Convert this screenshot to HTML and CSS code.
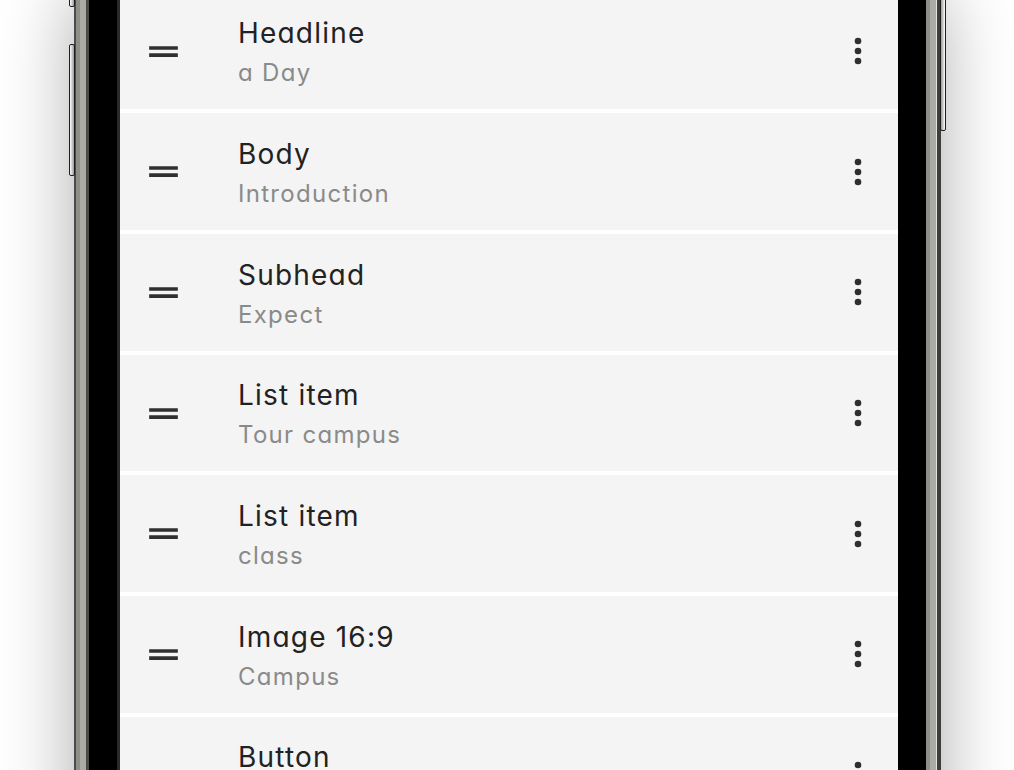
FILE: index.html
```html
<!DOCTYPE html>
<html>
<head>
<meta charset="utf-8">
<link rel="stylesheet" href="styles.css">
</head>
<body>
<div class="stage">
  <div class="phone">
    <div class="side-btn side-l1"></div>
    <div class="side-btn side-l2"></div>
    <div class="side-btn side-r1"></div>
    <div class="rim-a"><div class="rim-b"><div class="rim-c"><div class="rim-d">
      <div class="bezel">
        <div class="screen">
          <ul class="list">
            <li class="row"><span class="handle"><svg viewBox="0 0 24 24"><path d="M20 9H4v2h16V9zM4 15h16v-2H4v2z"/></svg></span><div class="text"><div class="title">Headline</div><div class="sub">a Day</div></div><span class="more"><svg viewBox="0 0 24 24"><circle cx="12" cy="6" r="2"/><circle cx="12" cy="12" r="2"/><circle cx="12" cy="18" r="2"/></svg></span></li>
            <li class="row"><span class="handle"><svg viewBox="0 0 24 24"><path d="M20 9H4v2h16V9zM4 15h16v-2H4v2z"/></svg></span><div class="text"><div class="title">Body</div><div class="sub">Introduction</div></div><span class="more"><svg viewBox="0 0 24 24"><circle cx="12" cy="6" r="2"/><circle cx="12" cy="12" r="2"/><circle cx="12" cy="18" r="2"/></svg></span></li>
            <li class="row"><span class="handle"><svg viewBox="0 0 24 24"><path d="M20 9H4v2h16V9zM4 15h16v-2H4v2z"/></svg></span><div class="text"><div class="title">Subhead</div><div class="sub">Expect</div></div><span class="more"><svg viewBox="0 0 24 24"><circle cx="12" cy="6" r="2"/><circle cx="12" cy="12" r="2"/><circle cx="12" cy="18" r="2"/></svg></span></li>
            <li class="row"><span class="handle"><svg viewBox="0 0 24 24"><path d="M20 9H4v2h16V9zM4 15h16v-2H4v2z"/></svg></span><div class="text"><div class="title">List item</div><div class="sub">Tour campus</div></div><span class="more"><svg viewBox="0 0 24 24"><circle cx="12" cy="6" r="2"/><circle cx="12" cy="12" r="2"/><circle cx="12" cy="18" r="2"/></svg></span></li>
            <li class="row"><span class="handle"><svg viewBox="0 0 24 24"><path d="M20 9H4v2h16V9zM4 15h16v-2H4v2z"/></svg></span><div class="text"><div class="title">List item</div><div class="sub">class</div></div><span class="more"><svg viewBox="0 0 24 24"><circle cx="12" cy="6" r="2"/><circle cx="12" cy="12" r="2"/><circle cx="12" cy="18" r="2"/></svg></span></li>
            <li class="row"><span class="handle"><svg viewBox="0 0 24 24"><path d="M20 9H4v2h16V9zM4 15h16v-2H4v2z"/></svg></span><div class="text"><div class="title">Image 16:9</div><div class="sub">Campus</div></div><span class="more"><svg viewBox="0 0 24 24"><circle cx="12" cy="6" r="2"/><circle cx="12" cy="12" r="2"/><circle cx="12" cy="18" r="2"/></svg></span></li>
            <li class="row"><span class="handle"><svg viewBox="0 0 24 24"><path d="M20 9H4v2h16V9zM4 15h16v-2H4v2z"/></svg></span><div class="text"><div class="title">Button</div><div class="sub">Register</div></div><span class="more"><svg viewBox="0 0 24 24"><circle cx="12" cy="6" r="2"/><circle cx="12" cy="12" r="2"/><circle cx="12" cy="18" r="2"/></svg></span></li>
          </ul>
        </div>
      </div>
    </div></div></div></div>
  </div>
</div>
</body>
</html>
```
FILE: styles.css
```css
html, body {
  margin: 0;
  padding: 0;
  background: #fff;
  height: 770px;
  overflow: hidden;
}
.stage {
  width: 1014px;
  height: 770px;
  overflow: hidden;
}
.phone {
  position: relative;
  width: 867px;
  margin-left: 74px;
  margin-top: -7.2px;
  box-shadow: 0 0 70px rgba(0, 0, 0, 0.33);
}
.rim-a {
  border-left: 2px solid #4b4b49;
  border-right: 4px solid #3e3e3c;
}
.rim-b {
  border-left: 4px solid #8e8f89;
  border-right: 1px solid #e2e2de;
}
.rim-c {
  border-left: 6px solid #aaaba5;
  border-right: 6px solid #aaaba5;
}
.rim-d {
  border-left: 3px solid #4a4a48;
  border-right: 4px solid #8e8f89;
}
.bezel {
  background: #000;
  padding: 0 28px;
}
.screen {
  background: #fff;
  border-left: 3px solid #2a2a2a;
}
.list {
  list-style: none;
  margin: 0;
  padding: 0;
  display: flex;
  flex-direction: column;
  gap: 4px;
  padding-bottom: 200px;
  font-family: Inter, "Liberation Sans", sans-serif;
  font-feature-settings: "cv11" 1;
}
.row {
  height: 116.67px;
  background: #f4f4f4;
  display: flex;
  align-items: center;
  position: relative;
}
.handle {
  width: 43px;
  height: 43px;
  margin-left: 21.8px;
  flex: none;
  display: block;
}
.handle svg, .more svg {
  width: 100%;
  height: 100%;
  display: block;
  fill: #2f2f2f;
}
.text {
  align-self: flex-start;
  padding-top: 20.5px;
  margin-left: 53.2px;
  flex: 1;
}
.title {
  font-size: 28px;
  line-height: 40px;
  color: #222;
  letter-spacing: 1.2px;
}
.sub {
  font-size: 24px;
  line-height: 40px;
  color: #8a8a8a;
  letter-spacing: 1.3px;
}
.more {
  width: 40px;
  height: 40px;
  flex: none;
  display: block;
  margin-right: 20.5px;
}
.side-btn {
  position: absolute;
  width: 4px;
  border: 1px solid #1e1e1e;
  border-radius: 2px;
  background: linear-gradient(to right, #ffffff, #9a9a9a);
}
.side-l1 {
  left: -5px;
  top: -60px;
  height: 72px;
}
.side-l2 {
  left: -5px;
  top: 51.5px;
  height: 130px;
}
.side-r1 {
  right: -5px;
  top: -40px;
  height: 176px;
  background: linear-gradient(to left, #ffffff, #9a9a9a);
}
```
